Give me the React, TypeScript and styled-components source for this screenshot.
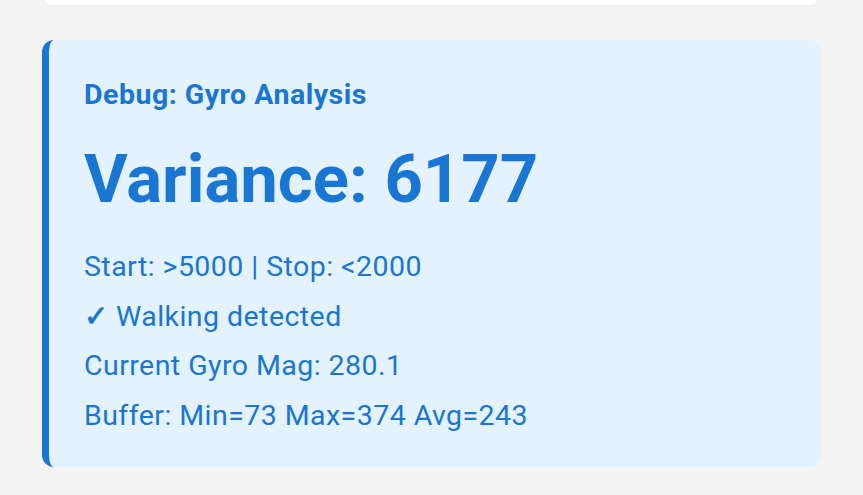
import React from "react";
import styled, { createGlobalStyle } from "styled-components";

const Global = createGlobalStyle`
  html, body { margin: 0; padding: 0; background: #f4f4f4; }
  body { font-family: Roboto, "Noto Sans", sans-serif; }
`;

const Page = styled.div`
  width: 863px;
  height: 495px;
  overflow: hidden;
  display: flex;
  flex-direction: column;
  gap: 35px;
  background: #f4f4f4;
`;

const TopCard = styled.div`
  height: 5px;
  margin: 0 46px;
  background: #ffffff;
  border-radius: 0 0 12px 12px;
  box-shadow: 0 1px 2px rgba(0, 0, 0, 0.04);
`;

const DebugCard = styled.section`
  margin: 0 42px;
  height: 427px;
  box-sizing: border-box;
  background: #e3f2fd;
  border-left: 7px solid #1976d2;
  border-radius: 12px;
  padding: 36px 36px 0 35px;
  color: #1976d2;
  display: flex;
  flex-direction: column;
`;

const Title = styled.h3`
  margin: 0;
  font-size: 28.5px;
  font-weight: 700;
  letter-spacing: 0.5px;
  line-height: 38px;
`;

const Value = styled.div`
  margin-top: 27px;
  font-size: 67px;
  font-weight: 700;
  line-height: 76px;
`;

const Lines = styled.div`
  margin-top: 25px;
  display: flex;
  flex-direction: column;
`;

const Line = styled.div`
  font-size: 28.5px;
  font-weight: 400;
  letter-spacing: 0.45px;
  line-height: 49.7px;
`;

const Check = styled.span`
  font-weight: 700;
`;

export default function App() {
  return (
    <Page>
      <Global />
      <TopCard />
      <DebugCard>
        <Title>Debug: Gyro Analysis</Title>
        <Value>Variance: 6177</Value>
        <Lines>
          <Line>Start: &gt;5000 | Stop: &lt;2000</Line>
          <Line>
            <Check>✓</Check> Walking detected
          </Line>
          <Line>Current Gyro Mag: 280.1</Line>
          <Line>Buffer: Min=73 Max=374 Avg=243</Line>
        </Lines>
      </DebugCard>
    </Page>
  );
}
